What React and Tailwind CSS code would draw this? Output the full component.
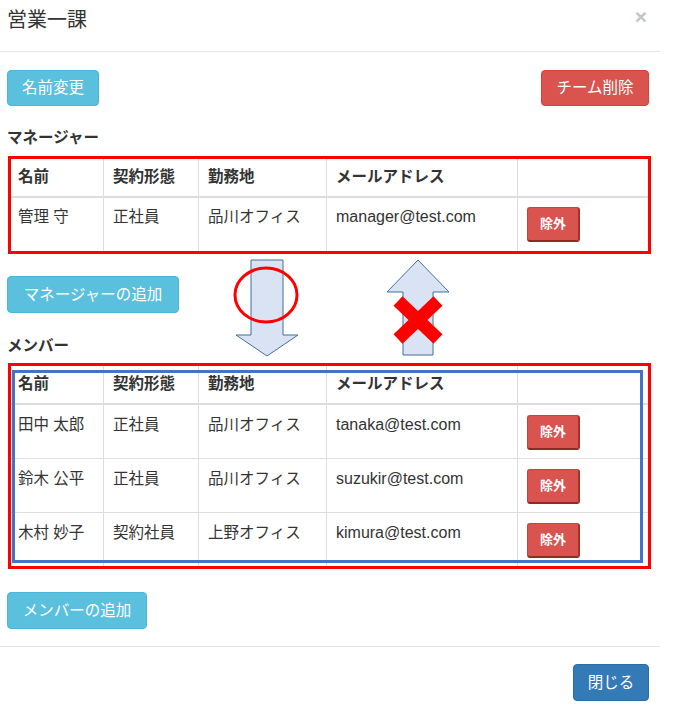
import React from "react";

const managers = [
  { name: "管理 守", type: "正社員", place: "品川オフィス", mail: "manager@test.com" },
];

const members = [
  { name: "田中 太郎", type: "正社員", place: "品川オフィス", mail: "tanaka@test.com" },
  { name: "鈴木 公平", type: "正社員", place: "品川オフィス", mail: "suzukir@test.com" },
  { name: "木村 妙子", type: "契約社員", place: "上野オフィス", mail: "kimura@test.com" },
];

const cols = "grid grid-cols-[92px_95px_128px_191px_131px]";

function Btn({ children, className }) {
  return (
    <button
      className={`flex items-center justify-center rounded-[4px] border text-[15.5px] text-white ${className}`}
    >
      {children}
    </button>
  );
}

function RemoveBtn() {
  return (
    <button className="flex h-[35px] w-[53px] items-center justify-center rounded-[3px] border border-[#c9413c] border-b-2 border-r-2 border-b-[#8f2a26] border-r-[#a5302c] bg-[#d9534f] text-[13px] font-bold text-white">
      除外
    </button>
  );
}

function MemberTable({ rows, first }) {
  return (
    <>
      <div className={`${cols} h-[39px] border-b-2 border-[#dddddd] font-bold`}>
        <div className="pl-[7px] pt-[7px]">名前</div>
        <div className="border-l border-[#dddddd] pl-[9px] pt-[7px]">契約形態</div>
        <div className="border-l border-[#dddddd] pl-[9px] pt-[7px]">勤務地</div>
        <div className="border-l border-[#dddddd] pl-[9px] pt-[7px]">メールアドレス</div>
        <div className="border-l border-[#dddddd]" />
      </div>
      {rows.map((r, i) => (
        <div
          key={r.mail}
          className={`${cols} ${i < rows.length - 1 ? "h-[54px] border-b border-[#dddddd]" : "h-[53px]"}`}
        >
          <div className={`pl-[7px] ${first ? "pt-[8px]" : "pt-[9px]"}`}>{r.name}</div>
          <div className={`border-l border-[#dddddd] pl-[9px] ${first ? "pt-[8px]" : "pt-[9px]"}`}>{r.type}</div>
          <div className={`border-l border-[#dddddd] pl-[9px] ${first ? "pt-[8px]" : "pt-[9px]"}`}>{r.place}</div>
          <div className={`border-l border-[#dddddd] pl-[9px] text-[16px] ${first ? "pt-[8px]" : "pt-[9px]"}`}>{r.mail}</div>
          <div className={`border-l border-[#dddddd] pl-[9px] ${first ? "pt-[9px]" : "pt-[10px]"}`}>
            <RemoveBtn />
          </div>
        </div>
      ))}
    </>
  );
}

export default function App() {
  return (
    <div className="relative h-[708px] w-[675px] overflow-hidden bg-white font-['Liberation_Sans','Noto_Sans_CJK_JP',sans-serif] text-[15.5px] leading-[22px] text-[#333333]">
      <div className="w-[660px]">
        {/* header */}
        <div className="flex h-[52px] items-start justify-between border-b border-[#e5e5e5] pl-[7px] pr-[13px] pt-[7px]">
          <h4 className="text-[20px] leading-[26px]">営業一課</h4>
          <span className="mt-[-3px] text-[21px] font-bold leading-[26px] text-[#c4c4c4]">×</span>
        </div>

        {/* body */}
        <div className="pb-[17px] pl-[7px] pr-[11px] pt-[18px]">
          <div className="flex justify-between">
            <Btn className="h-[36px] w-[92px] border-[#46b8da] bg-[#5bc0de]">名前変更</Btn>
            <Btn className="h-[36px] w-[108px] border-[#d43f3a] bg-[#d9534f]">チーム削除</Btn>
          </div>

          <h5 className="mt-[22px] font-bold leading-[20px]">マネージャー</h5>
          <div className="-mr-[2px] ml-[1px] mt-[8px] border-[3px] border-[#ff0000]">
            <MemberTable rows={managers} first />
          </div>

          <Btn className="mt-[22px] h-[37px] w-[172px] border-[#46b8da] bg-[#5bc0de]">マネージャーの追加</Btn>

          <h5 className="mt-[23px] font-bold leading-[20px]">メンバー</h5>
          <div className="relative -mr-[2px] ml-[1px] mt-[7px] border-[3px] border-[#ff0000]">
            <MemberTable rows={members} />
            <div className="absolute left-[1px] top-[4px] h-[193px] w-[631px] border-[3px] border-[#4472c4]" />
          </div>

          <Btn className="mt-[23px] h-[37px] w-[140px] border-[#46b8da] bg-[#5bc0de]">メンバーの追加</Btn>
        </div>

        {/* footer */}
        <div className="flex justify-end border-t border-[#e5e5e5] pr-[11px] pt-[17px]">
          <Btn className="h-[37px] w-[76px] border-[#2e6da4] bg-[#337ab7]">閉じる</Btn>
        </div>
      </div>

      {/* annotation arrows */}
      <svg className="pointer-events-none absolute left-0 top-0" width="675" height="708">
        <polygon
          points="251,260 283,260 283,335 298,335 267,356 236,335 251,335"
          fill="#dae3f3"
          stroke="#41719c"
          strokeWidth="1"
        />
        <ellipse cx="266" cy="295" rx="31" ry="27" fill="none" stroke="#ff0000" strokeWidth="3" />
        <polygon
          points="418,260 449,292 433,292 433,355 403,355 403,292 387,292"
          fill="#dae3f3"
          stroke="#41719c"
          strokeWidth="1"
        />
        <line x1="398" y1="301" x2="438" y2="339" stroke="#ff0000" strokeWidth="13" />
        <line x1="438" y1="301" x2="398" y2="339" stroke="#ff0000" strokeWidth="13" />
      </svg>
    </div>
  );
}
